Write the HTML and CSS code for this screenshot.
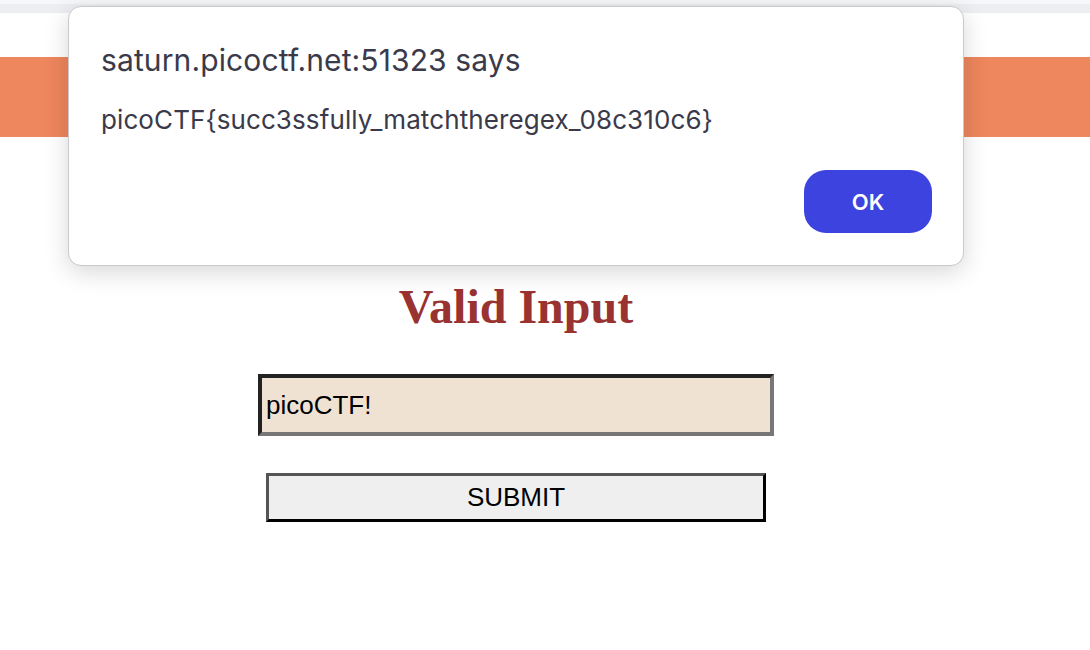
FILE: index.html
```html
<!DOCTYPE html>
<html>
<head>
<meta charset="utf-8">
<link rel="stylesheet" href="styles.css">
</head>
<body>
<div class="chrome"><div class="chrome-line"></div></div>
<div class="gap"></div>
<div class="banner"></div>
<main class="content">
  <h1 class="title">Valid Input</h1>
  <form class="form">
    <input class="field" type="text" value="picoCTF!">
    <button class="submit" type="button">SUBMIT</button>
  </form>
</main>
<div class="dialog">
  <div class="dialog-title">saturn.picoctf.net:51323 says</div>
  <div class="dialog-msg">picoCTF{succ3ssfully_matchtheregex_08c310c6}</div>
  <div class="dialog-actions"><button class="ok" type="button">OK</button></div>
</div>
</body>
</html>
```
FILE: styles.css
```css
html, body { margin: 0; padding: 0; background: #ffffff; }
body { width: 1090px; height: 650px; overflow: hidden; position: relative; font-family: "Liberation Sans", Arial, sans-serif; }
.chrome { height: 13px; background: #f6f7f9; display: flex; flex-direction: column; justify-content: flex-end; }
.chrome-line { height: 9px; background: #eceef1; }
.gap { height: 44px; }
.banner { height: 80px; background: #ee865e; }
.content { width: 1032px; display: flex; flex-direction: column; align-items: center; padding-top: 143px; }
.title { margin: 0; font-family: "Liberation Serif", "Times New Roman", serif; font-weight: bold; font-size: 48px; line-height: 54px; color: #993331; }
.form { display: flex; flex-direction: column; align-items: center; margin-top: 40px; }
.field { box-sizing: border-box; width: 516px; height: 62px; margin: 0; padding: 0 0 0 4px; border-width: 4px; border-style: solid; border-color: #222222 #777777 #777777 #222222; background: #efe2d3; font-family: "Liberation Sans", Arial, sans-serif; font-size: 26px; color: #000; outline: none; }
.submit { box-sizing: border-box; width: 500px; height: 49px; margin-top: 37px; padding: 0; border-width: 3px; border-style: solid; border-color: #555555 #000000 #000000 #555555; background: #efefef; font-family: "Liberation Sans", Arial, sans-serif; font-size: 26px; color: #000; }
.dialog { position: absolute; left: 68px; top: 6px; width: 896px; height: 260px; box-sizing: border-box; border: 1px solid #c9c9cc; border-radius: 13px; background: #ffffff; box-shadow: 0 6px 24px rgba(0,0,0,0.16); padding: 35px 31px 0 32px; display: flex; flex-direction: column; font-family: Inter, "Noto Sans", sans-serif; color: #3a3a4a; }
.dialog-title { font-size: 30px; line-height: 36px; letter-spacing: 0.12px; }
.dialog-msg { font-size: 26px; line-height: 32px; margin-top: 26px; letter-spacing: 0.1px; }
.dialog-actions { display: flex; justify-content: flex-end; margin-top: 34px; }
.ok { width: 128px; height: 63px; border: none; border-radius: 22px; background: #3d43de; color: #ffffff; font-family: Inter, "Noto Sans", sans-serif; font-weight: 600; font-size: 22px; }
```
